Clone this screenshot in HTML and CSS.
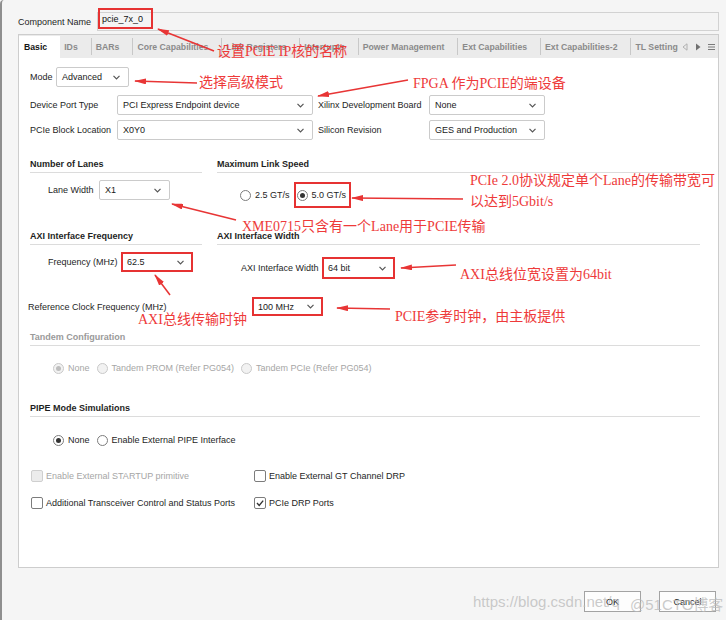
FILE: index.html
```html
<!DOCTYPE html>
<html lang="zh-CN">
<head>
    <meta charset="UTF-8">
    <title>pcie_7x_0</title>
    <link rel="stylesheet" href="styles.css">
</head>
<body>

    <div class="window">
        <div class="name-row">
            <span class="name-label">Component Name</span>
            <div class="name-input"><span class="name-val">pcie_7x_0</span></div>
        </div>

        <div class="panel">
            <div class="tabs">
                <div class="tab active">Basic</div>
                <div class="tab">IDs</div>
                <div class="tab sep">BARs</div>
                <div class="tab sep">Core Capabilities</div>
                <div class="tab sep">Link Registers</div>
                <div class="tab sep">Interrupts</div>
                <div class="tab sep">Power Management</div>
                <div class="tab sep">Ext Capabilities</div>
                <div class="tab sep">Ext Capabilities-2</div>
                <div class="tab sep last">TL Settings</div>
                <div class="tab-tools">
                    <svg width="6" height="8" viewBox="0 0 6 8"><path d="M5 0.8 L1 4 L5 7.2 Z" fill="none" stroke="#b0b0b0"/></svg>
                    <svg width="6" height="8" viewBox="0 0 6 8"><path d="M1 0.5 L5.5 4 L1 7.5 Z" fill="#707070"/></svg>
                    <svg width="7" height="8" viewBox="0 0 7 8"><path d="M0 1.5 H7 M0 4 H7 M0 6.5 H7" stroke="#7a7a7a" stroke-width="1"/></svg>
                </div>
            </div>

            <div class="content">
                <div class="mode-row">
                    <label class="mode-label">Mode</label>
                    <div class="select w-mode"><span>Advanced</span><svg class="chev" width="7" height="5"><polyline points="0.5,0.8 3.5,3.8 6.5,0.8"/></svg></div>
                </div>

                <div class="port-grid">
                    <label>Device Port Type</label>
                    <div class="select"><span>PCI Express Endpoint device</span><svg class="chev" width="7" height="5"><polyline points="0.5,0.8 3.5,3.8 6.5,0.8"/></svg></div>
                    <label class="pl">Xilinx Development Board</label>
                    <div class="select"><span>None</span><svg class="chev" width="7" height="5"><polyline points="0.5,0.8 3.5,3.8 6.5,0.8"/></svg></div>
                    <label>PCIe Block Location</label>
                    <div class="select"><span>X0Y0</span><svg class="chev" width="7" height="5"><polyline points="0.5,0.8 3.5,3.8 6.5,0.8"/></svg></div>
                    <label class="pl">Silicon Revision</label>
                    <div class="select"><span>GES and Production</span><svg class="chev" width="7" height="5"><polyline points="0.5,0.8 3.5,3.8 6.5,0.8"/></svg></div>
                </div>

                <div class="split s1">
                    <div class="group">
                        <div class="group-title">Number of Lanes</div>
                        <div class="field lane">
                            <label>Lane Width</label>
                            <div class="select"><span>X1</span><svg class="chev" width="7" height="5"><polyline points="0.5,0.8 3.5,3.8 6.5,0.8"/></svg></div>
                        </div>
                    </div>
                    <div class="group">
                        <div class="group-title">Maximum Link Speed</div>
                        <div class="choices speed">
                            <span class="opt"><i class="radio"></i>2.5 GT/s</span>
                            <span class="opt marked"><i class="radio on"></i>5.0 GT/s</span>
                        </div>
                    </div>
                </div>

                <div class="split s2">
                    <div class="group">
                        <div class="group-title">AXI Interface Frequency</div>
                        <div class="field freq">
                            <label>Frequency (MHz)</label>
                            <div class="select marked"><span>62.5</span><svg class="chev" width="7" height="5"><polyline points="0.5,0.8 3.5,3.8 6.5,0.8"/></svg></div>
                        </div>
                    </div>
                    <div class="group">
                        <div class="group-title">AXI Interface Width</div>
                        <div class="field axiw">
                            <label>AXI Interface Width</label>
                            <div class="select marked"><span>64 bit</span><svg class="chev" width="7" height="5"><polyline points="0.5,0.8 3.5,3.8 6.5,0.8"/></svg></div>
                        </div>
                    </div>
                </div>

                <div class="field refclk">
                    <label>Reference Clock Frequency (MHz)</label>
                    <div class="select marked"><span>100 MHz</span><svg class="chev" width="7" height="5"><polyline points="0.5,0.8 3.5,3.8 6.5,0.8"/></svg></div>
                </div>

                <div class="group-title wide muted tandem">Tandem Configuration</div>
                <div class="choices line tandem-opts disabled">
                    <span class="opt"><i class="radio on"></i>None</span>
                    <span class="opt"><i class="radio"></i>Tandem PROM (Refer PG054)</span>
                    <span class="opt"><i class="radio"></i>Tandem PCIe (Refer PG054)</span>
                </div>

                <div class="group-title wide pipe">PIPE Mode Simulations</div>
                <div class="choices line">
                    <span class="opt"><i class="radio on"></i>None</span>
                    <span class="opt"><i class="radio"></i>Enable External PIPE Interface</span>
                </div>

                <div class="checks">
                    <span class="opt disabled"><i class="check"></i>Enable External STARTUP primitive</span>
                    <span class="opt"><i class="check"></i>Enable External GT Channel DRP</span>
                    <span class="opt"><i class="check"></i>Additional Transceiver Control and Status Ports</span>
                    <span class="opt"><i class="check"><svg width="10" height="10" viewBox="0 0 10 10"><polyline points="2,5 4.2,7.4 8.2,2.6" fill="none" stroke="#333" stroke-width="1.4"/></svg></i>PCIe DRP Ports</span>
                </div>
            </div>
        </div>

        <div class="buttons">
            <button>OK</button>
            <button>Cancel</button>
        </div>
    </div>

    <!-- red notes drawn over the dialog -->
    <svg class="arrows" width="726" height="620">
        <defs>
            <marker id="ah" viewBox="0 0 12 6" refX="11" refY="3" markerWidth="12" markerHeight="6" markerUnits="userSpaceOnUse" orient="auto">
                <path d="M0 0 L12 3 L0 6 Z" fill="#e83535"/>
            </marker>
        </defs>
        <line x1="214" y1="51" x2="158" y2="29" marker-end="url(#ah)"/>
        <line x1="197" y1="83" x2="135" y2="81" marker-end="url(#ah)"/>
        <line x1="408" y1="80" x2="318" y2="96" marker-end="url(#ah)"/>
        <line x1="463" y1="199" x2="352" y2="198" marker-end="url(#ah)"/>
        <line x1="236" y1="220" x2="172" y2="204" marker-end="url(#ah)"/>
        <line x1="456" y1="265" x2="401" y2="268" marker-end="url(#ah)"/>
        <line x1="170" y1="295" x2="155" y2="275" marker-end="url(#ah)"/>
        <line x1="390" y1="309" x2="337" y2="308" marker-end="url(#ah)"/>
    </svg>

    <div class="notes">
        <div class="note n1">设置PCIE IP核的名称</div>
        <div class="note n2">选择高级模式</div>
        <div class="note n3">FPGA 作为PCIE的端设备</div>
        <div class="note n4">PCIe 2.0协议规定单个Lane的传输带宽可<br>以达到5Gbit/s</div>
        <div class="note n5">XME0715只含有一个Lane用于PCIE传输</div>
        <div class="note n6">AXI总线位宽设置为64bit</div>
        <div class="note n7">AXI总线传输时钟</div>
        <div class="note n8">PCIE参考时钟，由主板提供</div>
    </div>

    <div class="watermark">
        <span class="wm-url">https://blog.csdn.net/q</span>
        <span class="wm-site">@51CTO博客</span>
    </div>

</body>
</html>
```

FILE: styles.css
```css
html, body {
    margin: 0;
    overflow: hidden;
}
body {
    width: 726px;
    height: 620px;
    position: relative;
    background-color: #f5f5f5;
    font-family: "Liberation Sans", Arial, sans-serif;
    font-size: 9px;
    color: #1e1e1e;
}
.window {
    height: 620px;
    box-sizing: border-box;
    border-left: 2px solid #8f8f8f;
    border-top-left-radius: 4px;
    padding: 11px 7px 0 16px;
}

/* component name */
.name-row {
    display: flex;
    align-items: center;
    height: 19px;
    margin-top: 1px;
}
.name-label {
    width: 79px;
}
.name-input {
    flex: 1;
    height: 19px;
    box-sizing: border-box;
    border: 1px solid #d2d2d2;
    background-color: #f4f4f4;
    display: flex;
    align-items: flex-start;
}
.name-val {
    width: 55px;
    height: 21px;
    box-sizing: border-box;
    margin-top: -5px;
    padding-left: 2px;
    border: 2px solid #e63232;
    display: flex;
    align-items: center;
    color: #111;
}

/* tab panel */
.panel {
    margin-top: 3px;
    height: 534px;
    box-sizing: border-box;
    border: 1px solid #cdcdcd;
    background-color: #fff;
}
.tabs {
    display: flex;
    height: 23px;
    background-color: #ebebeb;
}
.tab {
    display: flex;
    align-items: center;
    padding: 0 13px 0 4px;
    font-size: 8.7px;
    font-weight: bold;
    color: #8a8a8a;
    white-space: nowrap;
}
.tab.active {
    margin-top: 1px;
    padding: 0 13px 0 5px;
    background-color: #fff;
    color: #151515;
}
.tab.sep {
    border-left: 1px solid #c8c8c8;
    margin: 3px 0;
}
.tab.last {
    flex: 1;
    min-width: 0;
    overflow: hidden;
}
.tab-tools {
    display: flex;
    align-items: center;
    gap: 7px;
    padding: 0 3px 0 4px;
}

.content {
    padding: 9px 16px 0 11px;
}
label {
    white-space: nowrap;
}

/* dropdowns */
.select {
    display: flex;
    align-items: center;
    justify-content: space-between;
    height: 20px;
    box-sizing: border-box;
    padding: 0 8px 0 5px;
    border: 1px solid #cbcbcb;
    border-radius: 2px;
    background-color: #fff;
    color: #1a1a1a;
    white-space: nowrap;
}
.select.marked {
    border: 2px solid #e63232;
    border-radius: 0;
    padding: 0 7px 0 4px;
}
.chev {
    flex: none;
}
.chev polyline {
    fill: none;
    stroke: #555;
    stroke-width: 1.2;
}

.mode-row {
    display: flex;
    align-items: center;
    height: 20px;
    margin-bottom: 8px;
}
.mode-label {
    width: 26px;
}
.w-mode {
    width: 73px;
}

.port-grid {
    display: grid;
    grid-template-columns: 87px 196px 116px 116px;
    grid-auto-rows: 20px;
    row-gap: 5px;
    align-items: center;
}
.port-grid .pl {
    padding-left: 5px;
}

/* sections */
.split {
    display: grid;
    grid-template-columns: 172px 483px;
    column-gap: 15px;
    align-items: start;
}
.s1 {
    margin-top: 19px;
}
.s2 {
    margin-top: 23px;
}
.group-title {
    font-weight: bold;
    line-height: 11px;
    padding-bottom: 2px;
    border-bottom: 1px solid #dcdcdc;
    color: #1e1e1e;
}
.group-title.wide {
    width: 670px;
}
.group-title.muted {
    color: #9a9a9a;
}
.tandem {
    margin-top: 16px;
}
.pipe {
    margin-top: 29px;
}

.field {
    display: flex;
    align-items: center;
}
.lane {
    margin-top: 7px;
    padding-left: 18px;
}
.lane label {
    width: 51px;
}
.lane .select {
    width: 71px;
}
.freq {
    margin-top: 7px;
    padding-left: 18px;
}
.freq label {
    width: 73px;
}
.freq .select {
    width: 72px;
}
.axiw {
    margin-top: 12px;
    padding-left: 24px;
}
.axiw label {
    width: 81px;
}
.axiw .select {
    width: 73px;
    height: 22px;
}
.refclk {
    margin-top: 18px;
    margin-left: -2px;
}
.refclk label {
    width: 224px;
}
.refclk .select {
    width: 71px;
    height: 19px;
}

/* radios and checkboxes */
.choices {
    display: flex;
    align-items: center;
}
.speed {
    margin-top: 9px;
    padding-left: 23px;
    height: 26px;
}
.choices.line {
    margin-top: 17px;
    padding-left: 23px;
    height: 12px;
}
.choices.tandem-opts {
    margin-top: 16px;
}
.opt {
    display: inline-flex;
    align-items: center;
    gap: 4px;
    margin-right: 7px;
    white-space: nowrap;
}
.speed .opt {
    margin-right: 4px;
}
.opt.marked {
    height: 26px;
    box-sizing: border-box;
    border: 2px solid #e63232;
    padding: 0 3px 0 1px;
}
.radio {
    width: 11px;
    height: 11px;
    box-sizing: border-box;
    border: 1px solid #7c7c7c;
    border-radius: 50%;
    background-color: #fff;
    display: flex;
    align-items: center;
    justify-content: center;
}
.radio.on::after {
    content: "";
    width: 5px;
    height: 5px;
    border-radius: 50%;
    background-color: #333;
}
.disabled {
    color: #a6a6a6;
}
.disabled .radio {
    border-color: #c9c9c9;
    background-color: #f2f2f2;
}
.disabled .radio.on::after {
    background-color: #bdbdbd;
}

.checks {
    display: grid;
    grid-template-columns: 223px auto;
    grid-auto-rows: 12px;
    row-gap: 15px;
    margin-top: 24px;
    padding-left: 1px;
}
.checks .opt {
    gap: 3px;
}
.check {
    width: 12px;
    height: 12px;
    box-sizing: border-box;
    border: 1px solid #7c7c7c;
    border-radius: 2px;
    background-color: #fff;
    display: flex;
    align-items: center;
    justify-content: center;
}
.disabled .check {
    border-color: #cfcfcf;
    background-color: #ececec;
}

/* dialog buttons */
.buttons {
    display: flex;
    justify-content: flex-end;
    gap: 18px;
    margin-top: 23px;
    padding-right: 3px;
}
button {
    width: 57px;
    height: 21px;
    padding: 0;
    border: 1px solid #a3a3a3;
    border-radius: 0;
    background-color: #fdfdfd;
    font-family: "Liberation Sans", Arial, sans-serif;
    font-size: 9px;
    color: #222;
}

/* annotations */
.arrows {
    position: absolute;
    left: 0;
    top: 0;
    pointer-events: none;
}
.arrows line {
    stroke: #e83535;
    stroke-width: 1.6;
}
.notes {
    position: absolute;
    inset: 0;
    pointer-events: none;
}
.note {
    position: absolute;
    font-family: "Liberation Serif", "Noto Sans CJK SC", serif;
    font-size: 14px;
    line-height: 14px;
    color: #ee3a3a;
    white-space: nowrap;
}
.n1 { left: 217px; top: 45px; }
.n2 { left: 199px; top: 76px; }
.n3 { left: 413px; top: 77px; }
.n4 { left: 470px; top: 170px; line-height: 21px; }
.n5 { left: 242px; top: 220px; }
.n6 { left: 460px; top: 268px; }
.n7 { left: 138px; top: 313px; }
.n8 { left: 395px; top: 310px; }

.watermark {
    position: absolute;
    inset: 0;
    pointer-events: none;
    font-family: "Liberation Sans", "Noto Sans CJK SC", sans-serif;
    font-size: 15px;
    color: rgba(185, 185, 185, 0.75);
}
.wm-url {
    position: absolute;
    left: 473px;
    top: 593px;
}
.wm-site {
    position: absolute;
    left: 630px;
    top: 593px;
}
```
